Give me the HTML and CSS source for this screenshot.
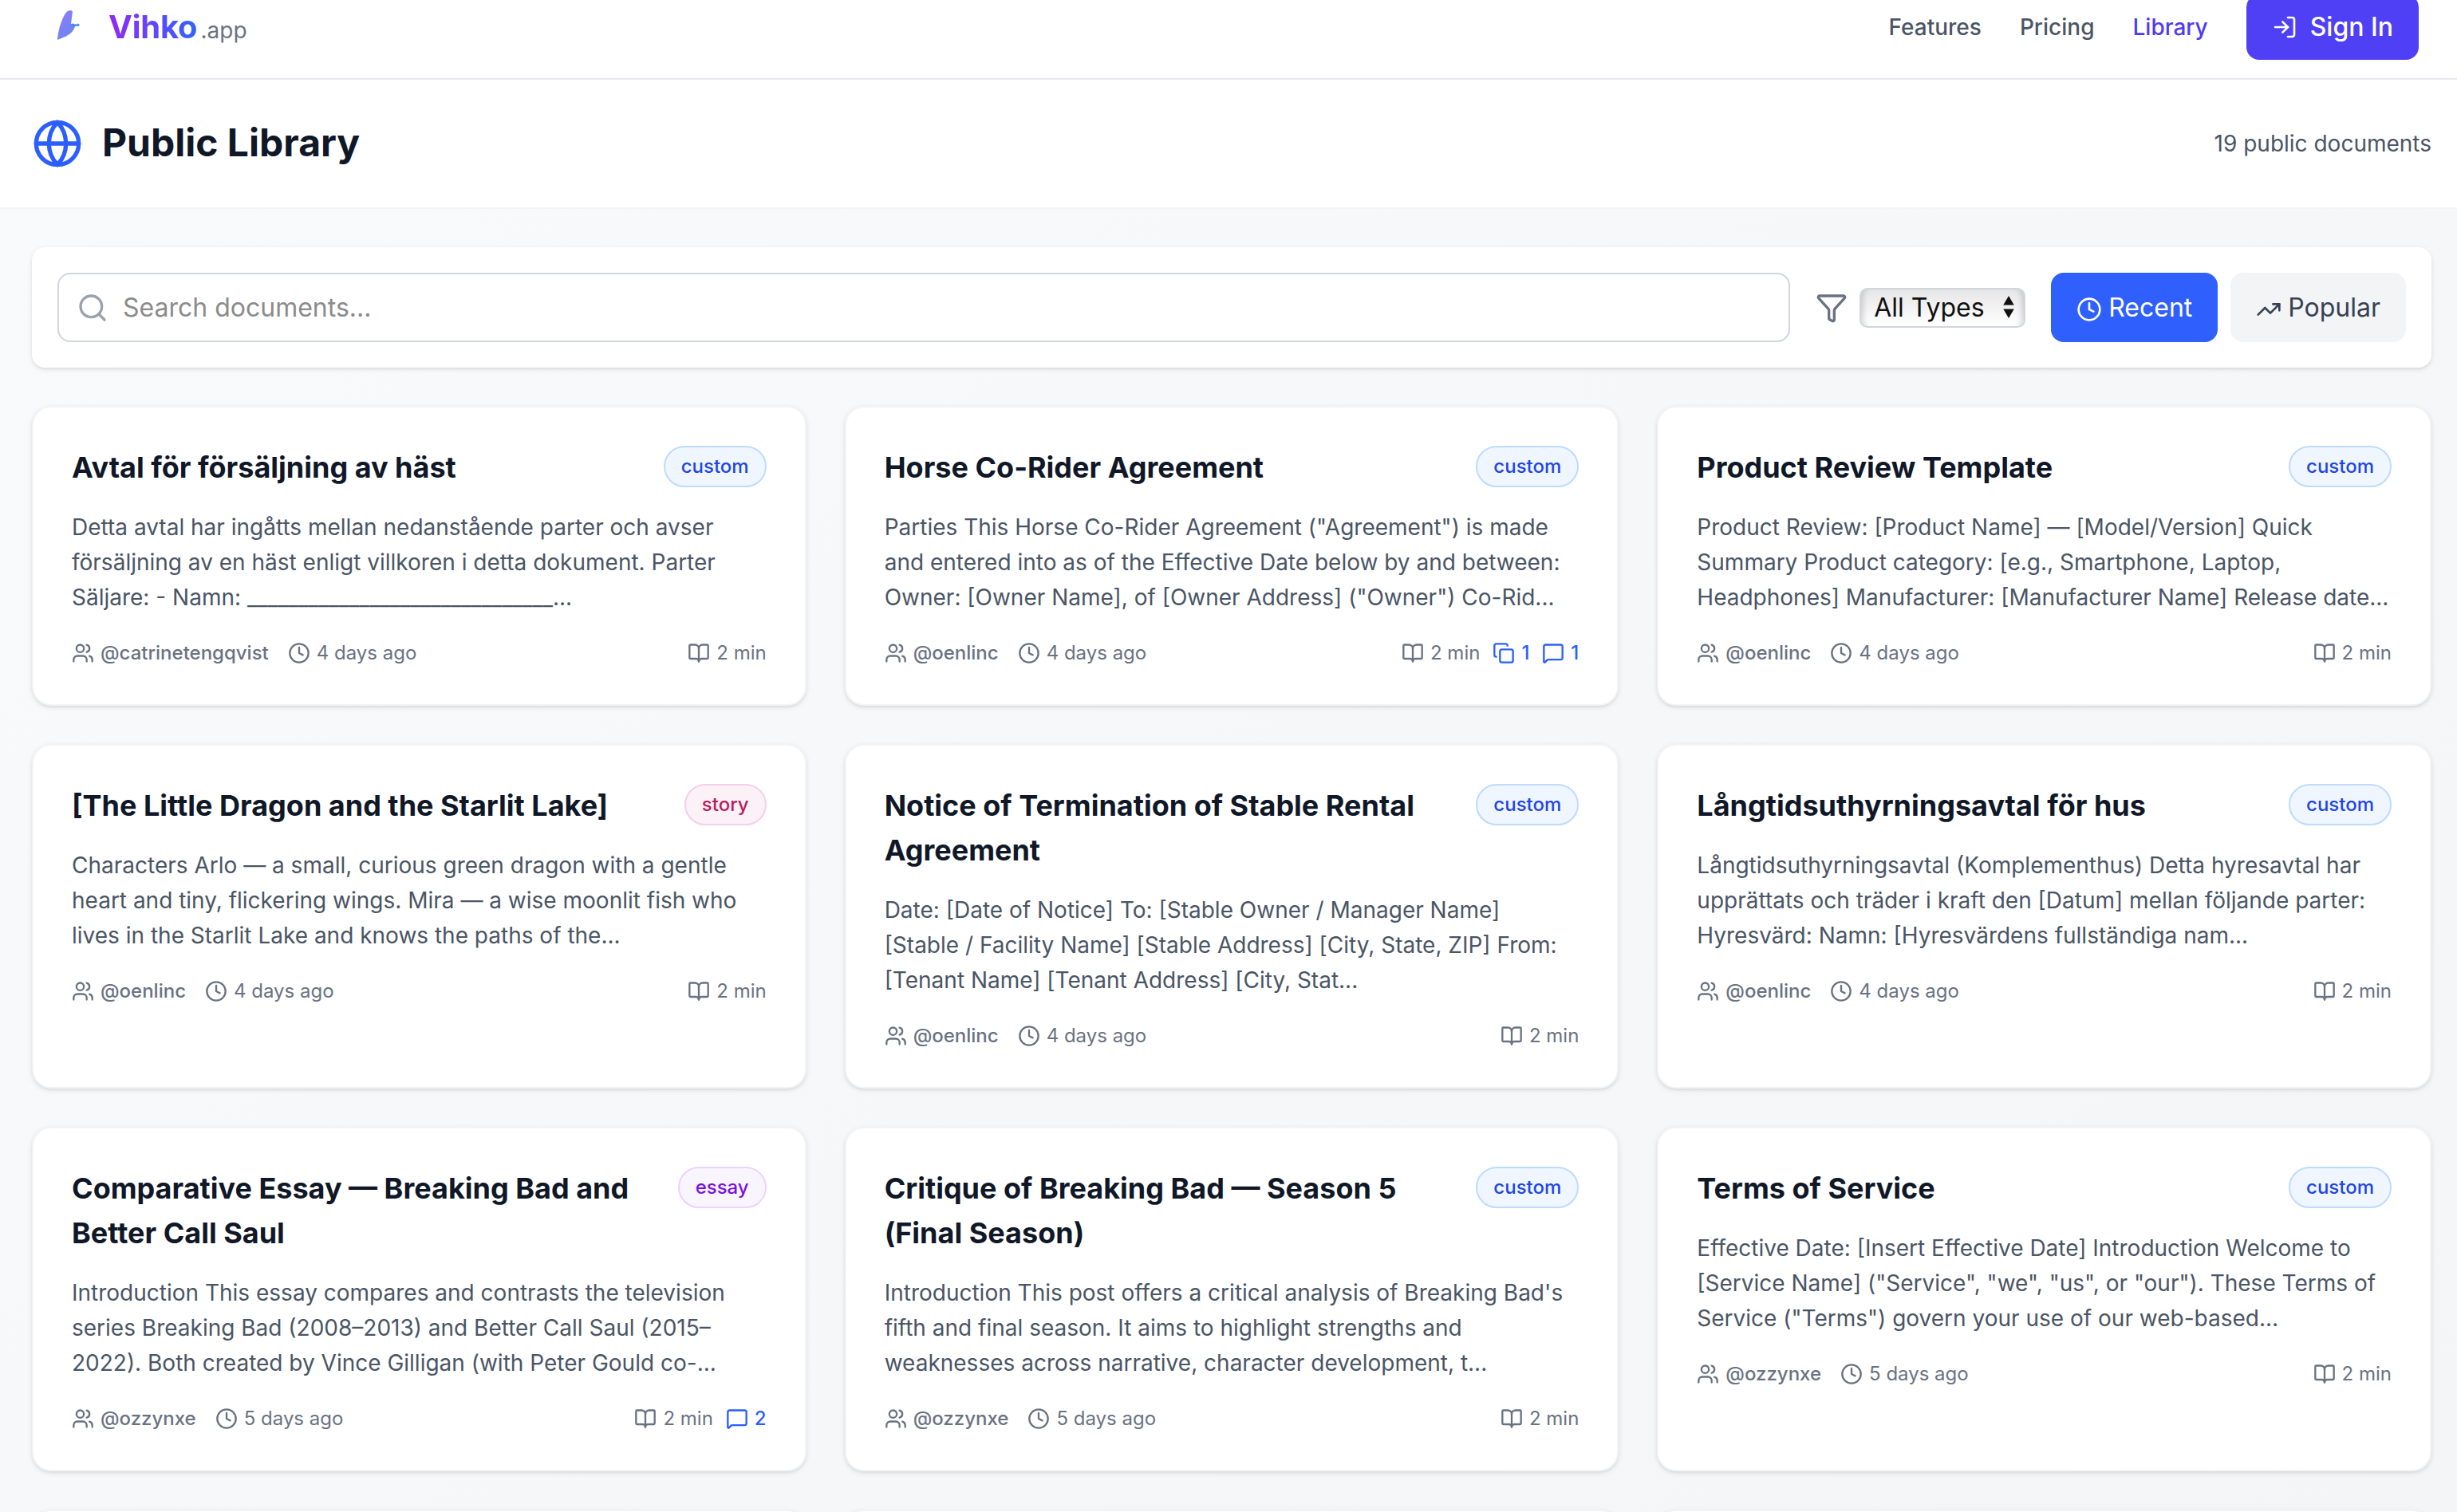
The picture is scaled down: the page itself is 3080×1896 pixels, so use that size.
FILE: index.html
```html
<!DOCTYPE html>
<html lang="en">
<head>
    <meta charset="UTF-8">
    <meta name="viewport" content="width=device-width, initial-scale=1.0">
    <title>Public Library - Vihko</title>
    <link rel="stylesheet" href="styles.css">
</head>
<body>
    <!-- icon sprite -->
    <svg class="sprite" xmlns="http://www.w3.org/2000/svg">
        <symbol id="i-clock" viewBox="0 0 24 24"><circle cx="12" cy="12" r="10"/><path d="M12 6v6l4 2"/></symbol>
        <symbol id="i-users" viewBox="0 0 24 24"><path d="M16 21v-2a4 4 0 0 0-4-4H6a4 4 0 0 0-4 4v2"/><path d="M16 3.128a4 4 0 0 1 0 7.744"/><path d="M22 21v-2a4 4 0 0 0-3-3.87"/><circle cx="9" cy="7" r="4"/></symbol>
        <symbol id="i-book" viewBox="0 0 24 24"><path d="M12 7v14"/><path d="M3 18a1 1 0 0 1-1-1V4a1 1 0 0 1 1-1h5a4 4 0 0 1 4 4 4 4 0 0 1 4-4h5a1 1 0 0 1 1 1v13a1 1 0 0 1-1 1h-6a3 3 0 0 0-3 3 3 3 0 0 0-3-3z"/></symbol>
        <symbol id="i-copy" viewBox="0 0 24 24"><rect x="8" y="8" width="14" height="14" rx="2"/><path d="M4 16c-1.1 0-2-.9-2-2V4c0-1.1.9-2 2-2h10c1.1 0 2 .9 2 2"/></symbol>
        <symbol id="i-message" viewBox="0 0 24 24"><path d="M22 17a2 2 0 0 1-2 2H6.828a2 2 0 0 0-1.414.586l-2.202 2.202A.71.71 0 0 1 2 21.286V5a2 2 0 0 1 2-2h16a2 2 0 0 1 2 2z"/></symbol>
        <symbol id="i-globe" viewBox="0 0 24 24"><circle cx="12" cy="12" r="10"/><path d="M12 2a14.5 14.5 0 0 0 0 20 14.5 14.5 0 0 0 0-20"/><path d="M2 12h20"/></symbol>
        <symbol id="i-search" viewBox="0 0 24 24"><path d="m21 21-4.34-4.34"/><circle cx="11" cy="11" r="8"/></symbol>
        <symbol id="i-funnel" viewBox="0 0 24 24"><path d="M10 20a1 1 0 0 0 .553.895l2 1A1 1 0 0 0 14 21v-7a2 2 0 0 1 .517-1.341L21.74 4.67A1 1 0 0 0 21 3H3a1 1 0 0 0-.742 1.67l7.225 7.989A2 2 0 0 1 10 14z"/></symbol>
        <symbol id="i-trending" viewBox="0 0 24 24"><path d="M16 7h6v6"/><path d="m22 7-8.5 8.5-5-5L2 17"/></symbol>
        <symbol id="i-login" viewBox="0 0 24 24"><path d="m10 17 5-5-5-5"/><path d="M15 12H3"/><path d="M15 3h4a2 2 0 0 1 2 2v14a2 2 0 0 1-2 2h-4"/></symbol>
    </svg>

    <nav class="navbar">
        <a class="brand" href="#">
            <svg class="brand-mark" viewBox="0 0 32 40">
                <defs>
                    <linearGradient id="feather" x1="0.3" y1="0" x2="0.8" y2="1">
                        <stop offset="0" stop-color="#8b7cf6"/>
                        <stop offset="1" stop-color="#6a86f2"/>
                    </linearGradient>
                </defs>
                <path fill="url(#feather)" d="M2 38C3 24 9 7 14 2.500Q18-.5 21 2.200L19 18L24 21.600C20 32 12 34 2 38Z"/>
                <path fill="#4a8df0" d="M18.500 19Q21 16.500 23.500 18.200L26 18.400Q28 16.500 29.600 18.800Q29.500 22 26.500 20.600L24 21.200Q21 22.500 18.500 21Z"/>
            </svg>
            <span class="brand-name">Vihko</span>
            <span class="brand-suffix">.app</span>
        </a>
        <div class="nav-links">
            <a href="#">Features</a>
            <a href="#">Pricing</a>
            <a class="active" href="#">Library</a>
            <a class="sign-in" href="#"><svg class="icon"><use href="#i-login"/></svg>Sign In</a>
        </div>
    </nav>

    <header class="page-header">
        <svg class="icon globe"><use href="#i-globe"/></svg>
        <h1>Public Library</h1>
        <span class="doc-count">19 public documents</span>
    </header>

    <main class="container">
        <div class="toolbar">
            <label class="search">
                <svg class="icon"><use href="#i-search"/></svg>
                <input type="text" placeholder="Search documents...">
            </label>
            <div class="filter">
                <svg class="icon"><use href="#i-funnel"/></svg>
                <div class="type-select">
                    <span>All Types</span>
                    <svg viewBox="0 0 14 30"><path d="M7 0l7 12H0zM7 29l7-12H0z"/></svg>
                </div>
            </div>
            <div class="sort">
                <button class="sort-btn selected"><svg class="icon"><use href="#i-clock"/></svg>Recent</button>
                <button class="sort-btn"><svg class="icon"><use href="#i-trending"/></svg>Popular</button>
            </div>
        </div>

        <div class="grid" id="doc-grid"></div>
    </main>

    <script src="script.js"></script>
</body>
</html>
```
FILE: styles.css
```css
* {
    box-sizing: border-box;
}

body {
    margin: 0;
    height: 1896px;
    overflow: hidden;
    font-family: Inter, "Liberation Sans", sans-serif;
    font-size: 32px;
    line-height: 48px;
    color: #101828;
    background: linear-gradient(to bottom right, #f9fafb, #f3f4f6) 0 0 / 3080px 3000px;
}

a {
    color: inherit;
    text-decoration: none;
}

.sprite {
    display: none;
}

.icon {
    flex: none;
    width: 28px;
    height: 28px;
    fill: none;
    stroke: currentColor;
    stroke-width: 2;
    stroke-linecap: round;
    stroke-linejoin: round;
}

/* top bar, partly scrolled off */
.navbar {
    display: flex;
    justify-content: space-between;
    height: 100px;
    padding: 0 48px 0 70px;
    background: #fff;
    border-bottom: 2px solid #e5e7eb;
}

.brand {
    display: flex;
    align-items: baseline;
    height: 68px;
    line-height: 68px;
}

.brand-mark {
    align-self: flex-start;
    width: 32px;
    height: 40px;
    margin: 12px 34px 0 0;
}

.brand-name {
    font-size: 40px;
    font-weight: 700;
    letter-spacing: -0.2px;
    background: linear-gradient(to right, #9128f8, #3064fc);
    -webkit-background-clip: text;
    background-clip: text;
    color: transparent;
}

.brand-suffix {
    margin-left: 4px;
    font-size: 28px;
    color: #6a7282;
}

.nav-links {
    display: flex;
    align-items: center;
    gap: 48px;
    height: 68px;
    font-size: 28px;
    font-weight: 500;
    color: #4a5565;
}

.nav-links .active {
    color: #4f39f6;
}

.sign-in {
    display: flex;
    align-items: center;
    gap: 16px;
    height: 82px;
    padding: 0 32px;
    border-radius: 16px;
    background: #4f40f5;
    color: #fff;
    font-size: 32px;
}

.sign-in .icon {
    width: 32px;
    height: 32px;
}

.page-header {
    display: flex;
    align-items: center;
    height: 162px;
    padding: 0 32px 0 40px;
    background: #fff;
    border-bottom: 2px solid #f3f4f6;
}

.globe {
    width: 64px;
    height: 64px;
    color: #2b5ffd;
}

h1 {
    margin: 0 0 2px 24px;
    font-size: 48px;
    font-weight: 700;
    line-height: 64px;
}

.doc-count {
    margin-left: auto;
    font-size: 28px;
    color: #4a5565;
}

.container {
    padding: 48px 32px 0 40px;
}

.toolbar {
    display: flex;
    align-items: center;
    gap: 32px;
    height: 151px;
    padding: 0 32px;
    margin-bottom: 48px;
    background: #fff;
    border-radius: 16px;
    box-shadow: 0 2px 6px rgba(0,0,0,0.1), 0 2px 4px -2px rgba(0,0,0,0.1);
}

.search {
    display: flex;
    align-items: center;
    flex: 1;
    gap: 18px;
    height: 87px;
    padding: 0 24px 0 22px;
    border: 2px solid #d1d5dc;
    border-radius: 16px;
}

.search .icon,
.filter .icon {
    width: 40px;
    height: 40px;
    color: #99a1af;
}

.search input {
    flex: 1;
    padding: 1px 0 0;
    border: 0;
    outline: 0;
    font: inherit;
    background: none;
}

.search input::placeholder {
    color: #8b8b8b;
}

.filter {
    display: flex;
    align-items: center;
    gap: 15px;
}

.filter .icon {
    color: #6a7282;
}

.type-select {
    display: flex;
    align-items: center;
    justify-content: space-between;
    width: 208px;
    height: 50px;
    padding: 0 12px 0 16px;
    border: 2px solid #d1d5dc;
    border-radius: 10px;
    background: linear-gradient(#e6e6e6, #fff);
    box-shadow: inset 8px 0 6px -5px rgba(0,0,0,0.15), inset -8px 0 6px -5px rgba(0,0,0,0.15);
    color: #111;
}

.type-select svg {
    width: 14px;
    height: 29px;
    fill: #111;
}

.sort {
    display: flex;
    gap: 16px;
}

.sort-btn {
    display: flex;
    align-items: center;
    gap: 8px;
    height: 87px;
    padding: 0 32px;
    border: 0;
    border-radius: 16px;
    background: #f3f4f6;
    color: #364153;
    font: inherit;
}

.sort-btn .icon {
    width: 32px;
    height: 32px;
    margin-top: 5px;
}

.sort-btn.selected {
    background: #2f5ffc;
    color: #fff;
}

.grid {
    display: grid;
    grid-template-columns: repeat(3, 1fr);
    gap: 48px;
}

.card {
    min-height: 376px;
    padding: 48px;
    background: #fff;
    border: 2px solid #f3f4f6;
    border-radius: 24px;
    box-shadow: 0 2px 6px rgba(0,0,0,0.1), 0 2px 4px -2px rgba(0,0,0,0.1);
}

.card-head {
    display: flex;
    justify-content: space-between;
    align-items: flex-start;
    gap: 24px;
    margin-bottom: 24px;
}

.card h3 {
    margin: -1px 0 1px;
    font-size: 36px;
    font-weight: 700;
    line-height: 56px;
}

.badge {
    flex: none;
    padding: 8px 20px;
    border: 2px solid #bedbff;
    border-radius: 26px;
    background: #eff6ff;
    color: #1f45e8;
    font-size: 24px;
    font-weight: 500;
    line-height: 32px;
}

.badge.story {
    border-color: #f6cfe8;
    background: #fbf1f7;
    color: #b91c5c;
}

.badge.essay {
    border-color: #e9d4ff;
    background: #f9f5ff;
    color: #7a12dc;
}

.card p {
    margin: 0 0 32px;
    font-size: 28px;
    line-height: 44px;
    color: #4a5565;
    white-space: nowrap;
}

.meta {
    display: flex;
    gap: 24px;
    font-size: 24px;
    line-height: 32px;
    color: #6a7282;
}

.meta span {
    display: flex;
    align-items: center;
    gap: 8px;
}

.meta .author {
    font-weight: 500;
}

.meta .stats {
    gap: 16px;
    margin-left: auto;
}

.meta .count {
    color: #2b5ffd;
    font-weight: 500;
}
```
FILE: script.js
```js
const docs = [
    { title: 'Avtal för försäljning av häst', type: 'custom', author: 'catrinetengqvist', age: 4,
      text: ['Detta avtal har ingåtts mellan nedanstående parter och avser', 'försäljning av en häst enligt villkoren i detta dokument. Parter', 'Säljare: - Namn: ______________________________...'] },
    { title: 'Horse Co-Rider Agreement', type: 'custom', author: 'oenlinc', age: 4, copies: 1, comments: 1,
      text: ['Parties This Horse Co-Rider Agreement ("Agreement") is made', 'and entered into as of the Effective Date below by and between:', 'Owner: [Owner Name], of [Owner Address] ("Owner") Co-Rid...'] },
    { title: 'Product Review Template', type: 'custom', author: 'oenlinc', age: 4,
      text: ['Product Review: [Product Name] — [Model/Version] Quick', 'Summary Product category: [e.g., Smartphone, Laptop,', 'Headphones] Manufacturer: [Manufacturer Name] Release date...'] },
    { title: '[The Little Dragon and the Starlit Lake]', type: 'story', author: 'oenlinc', age: 4,
      text: ['Characters Arlo — a small, curious green dragon with a gentle', 'heart and tiny, flickering wings. Mira — a wise moonlit fish who', 'lives in the Starlit Lake and knows the paths of the...'] },
    { title: 'Notice of Termination of Stable Rental Agreement', type: 'custom', author: 'oenlinc', age: 4,
      text: ['Date: [Date of Notice] To: [Stable Owner / Manager Name]', '[Stable / Facility Name] [Stable Address] [City, State, ZIP] From:', '[Tenant Name] [Tenant Address] [City, Stat...'] },
    { title: 'Långtidsuthyrningsavtal för hus', type: 'custom', author: 'oenlinc', age: 4,
      text: ['Långtidsuthyrningsavtal (Komplementhus) Detta hyresavtal har', 'upprättats och träder i kraft den [Datum] mellan följande parter:', 'Hyresvärd: Namn: [Hyresvärdens fullständiga nam...'] },
    { title: 'Comparative Essay — Breaking Bad and Better Call Saul', type: 'essay', author: 'ozzynxe', age: 5, comments: 2,
      text: ['Introduction This essay compares and contrasts the television', 'series Breaking Bad (2008–2013) and Better Call Saul (2015–', '2022). Both created by Vince Gilligan (with Peter Gould co-...'] },
    { title: 'Critique of Breaking Bad — Season 5 (Final Season)', type: 'custom', author: 'ozzynxe', age: 5,
      text: ["Introduction This post offers a critical analysis of Breaking Bad's", 'fifth and final season. It aims to highlight strengths and', 'weaknesses across narrative, character development, t...'] },
    { title: 'Terms of Service', type: 'custom', author: 'ozzynxe', age: 5,
      text: ['Effective Date: [Insert Effective Date] Introduction Welcome to', '[Service Name] ("Service", "we", "us", or "our"). These Terms of', 'Service ("Terms") govern your use of our web-based...'] }
];

const icon = name => `<svg class="icon"><use href="#i-${name}"/></svg>`;

const card = doc => `
    <article class="card">
        <div class="card-head">
            <h3>${doc.title}</h3>
            <span class="badge ${doc.type}">${doc.type}</span>
        </div>
        <p>${doc.text.join('<br>')}</p>
        <div class="meta">
            <span class="author">${icon('users')}@${doc.author}</span>
            <span>${icon('clock')}${doc.age} days ago</span>
            <span class="stats">
                <span>${icon('book')}2 min</span>
                ${doc.copies ? `<span class="count">${icon('copy')}${doc.copies}</span>` : ''}
                ${doc.comments ? `<span class="count">${icon('message')}${doc.comments}</span>` : ''}
            </span>
        </div>
    </article>`;

// the next row only peeks in at the bottom edge
document.getElementById('doc-grid').innerHTML =
    docs.map(card).join('') + '<article class="card"></article>'.repeat(3);
```
